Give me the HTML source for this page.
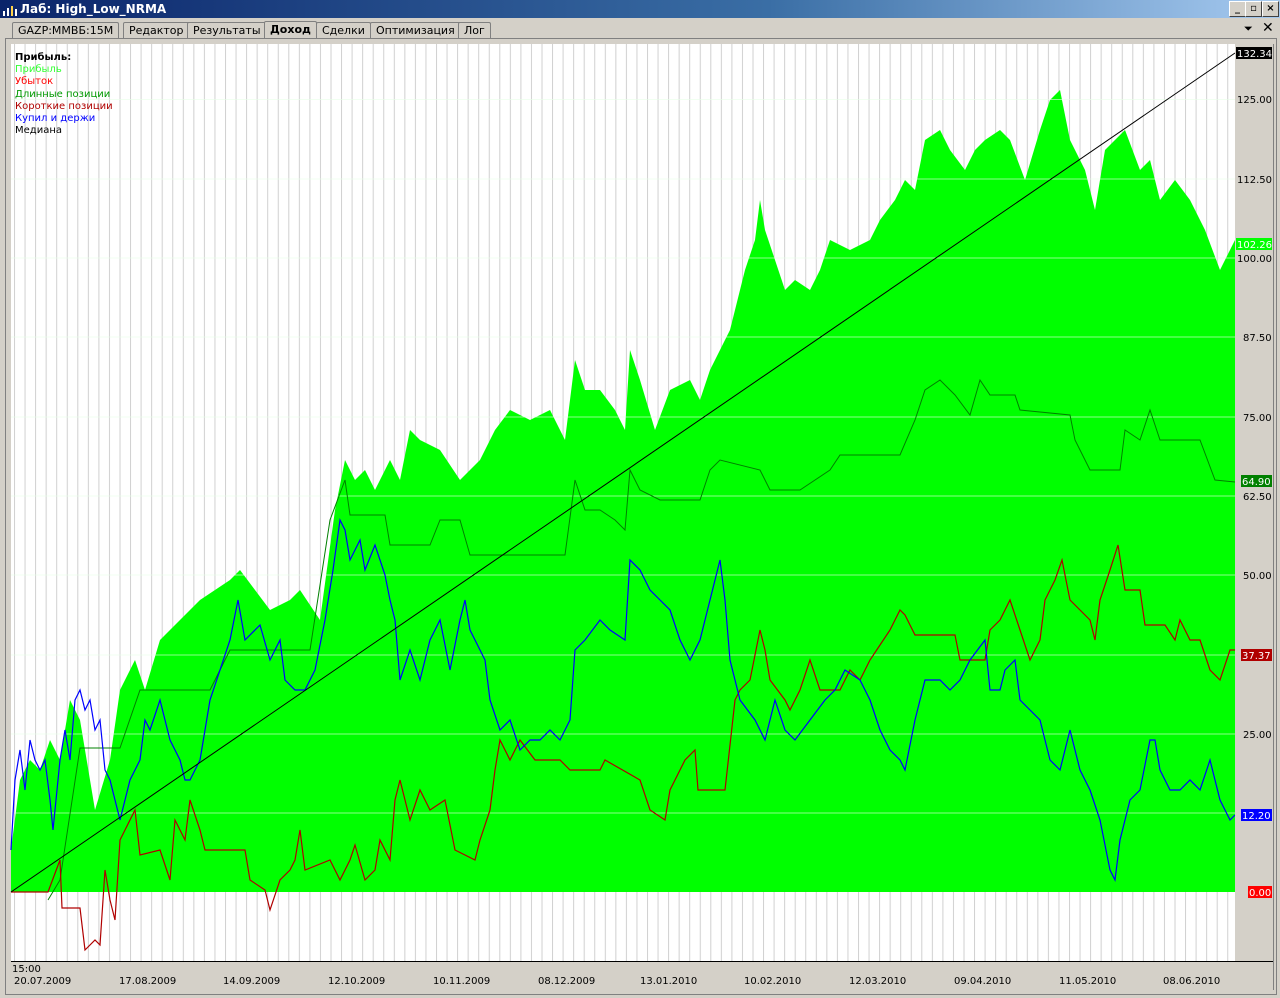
<!DOCTYPE html>
<html><head><meta charset="utf-8"><style>
html,body{margin:0;padding:0;width:1280px;height:998px;overflow:hidden;background:#d4d0c8;font-family:Tahoma,"DejaVu Sans","Liberation Sans",sans-serif;font-size:11px}
#title{position:absolute;left:0;top:0;width:1280px;height:18px;background:linear-gradient(90deg,#0a246a 0%,#3a6ea5 60%,#a6caf0 100%);color:#fff;font-weight:bold;font-size:12px;line-height:18px}
#title span{position:absolute;left:20px;top:0}
.btn{position:absolute;top:1px;width:15px;height:14px;background:#d4d0c8;border:1px solid;border-color:#fff #404040 #404040 #fff;color:#000;font-size:10px;line-height:13px;text-align:center;font-weight:bold}
#tabs{position:absolute;left:0;top:20px;width:1280px;height:18px}
.tab{position:absolute;top:2px;height:15px;border:1px solid #808080;border-bottom:none;background:#d4d0c8;line-height:15px;padding:0 5px;color:#000;border-radius:2px 2px 0 0}
svg{position:absolute;left:0;top:0}
</style></head><body>
<div id="title"><svg width="18" height="18" style="position:relative;left:1px;top:0"><rect x="2" y="11" width="2" height="5" fill="#fff"/><rect x="6" y="8" width="2" height="8" fill="#fff"/><rect x="10" y="6" width="2" height="10" fill="#ffd24a"/><rect x="14" y="9" width="2" height="7" fill="#fff"/></svg><span>Лаб: High_Low_NRMA</span>
<div class="btn" style="left:1229px">_</div><div class="btn" style="left:1245px">▫</div><div class="btn" style="left:1262px">×</div></div>
<div id="tabs">
<div class="tab" style="left:12px">GAZP:ММВБ:15M</div>
<div class="tab" style="left:123px">Редактор</div>
<div class="tab" style="left:187px">Результаты</div>
<div class="tab" style="left:264px;font-weight:bold;top:1px;height:17px">Доход</div>
<div class="tab" style="left:316px">Сделки</div>
<div class="tab" style="left:370px">Оптимизация</div>
<div class="tab" style="left:458px">Лог</div>
<div style="position:absolute;left:1244px;top:2px;font-size:11px">⏷</div>
<div style="position:absolute;left:1262px;top:0px;font-size:14px">✕</div>
</div>
<div style="position:absolute;left:5px;top:38px;width:1270px;height:955px;border:1px solid #808080;background:#d4d0c8"></div>
<div style="position:absolute;left:11px;top:44px;width:1224px;height:917px;background:#fff"></div>
<svg width="1280" height="998">
<defs><pattern id="vg" x="14" y="0" width="10.55" height="998" patternUnits="userSpaceOnUse"><rect x="0" y="0" width="1" height="998" fill="#d0d0d0"/></pattern></defs>
<rect x="11" y="44" width="1224" height="917" fill="url(#vg)"/>
<polygon fill="#00ff00" points="11,892 11,850 20,780 30,760 40,770 50,740 60,760 70,700 80,720 90,780 95,810 110,760 120,690 135,660 145,690 160,640 180,620 200,600 215,590 230,580 240,570 255,590 270,610 290,600 300,590 320,620 335,510 345,460 355,480 365,470 375,490 390,460 400,480 410,430 420,440 440,450 460,480 480,460 495,430 510,410 530,420 550,410 565,440 575,360 585,390 600,390 615,410 625,430 630,350 640,380 655,430 670,390 690,380 700,400 710,370 720,350 730,330 745,270 755,240 760,200 765,230 775,260 785,290 795,280 810,290 820,270 830,240 850,250 870,240 880,220 895,200 905,180 915,190 925,140 940,130 950,150 965,170 975,150 985,140 1000,130 1010,140 1025,180 1040,130 1050,100 1060,90 1070,140 1085,170 1095,210 1105,150 1115,140 1125,130 1140,170 1150,160 1160,200 1175,180 1190,200 1205,230 1220,270 1235,240 1235,892"/>
<g stroke="#e8ffe8" stroke-opacity="0.6" stroke-width="1">
<line x1="11" y1="99.5" x2="1235" y2="99.5"/><line x1="11" y1="179" x2="1235" y2="179"/><line x1="11" y1="258" x2="1235" y2="258"/><line x1="11" y1="337" x2="1235" y2="337"/><line x1="11" y1="417" x2="1235" y2="417"/><line x1="11" y1="496" x2="1235" y2="496"/><line x1="11" y1="575" x2="1235" y2="575"/><line x1="11" y1="655" x2="1235" y2="655"/><line x1="11" y1="734" x2="1235" y2="734"/><line x1="11" y1="813" x2="1235" y2="813"/></g>
<polyline fill="none" stroke="#008000" stroke-width="1" points="48,900 60,880 80,748 120,748 140,690 210,690 230,650 310,650 330,520 345,480 350,515 385,515 390,545 430,545 440,520 460,520 470,555 565,555 575,480 585,510 600,510 615,520 625,530 630,470 640,490 660,500 700,500 710,470 720,460 760,470 770,490 800,490 830,470 840,455 900,455 915,420 925,390 940,380 955,395 970,415 980,380 990,395 1015,395 1020,410 1070,415 1075,440 1090,470 1120,470 1125,430 1140,440 1150,410 1160,440 1200,440 1215,480 1235,482"/>
<polyline fill="none" stroke="#b00000" stroke-width="1.2" points="11,892 48,892 60,860 62,908 80,908 85,950 95,940 100,945 105,870 110,900 115,920 120,840 125,830 135,810 140,855 160,850 170,880 175,820 185,840 190,800 200,830 205,850 245,850 250,880 265,890 270,910 280,880 290,870 295,860 300,830 305,870 330,860 340,880 350,860 355,845 365,880 375,870 380,840 390,860 395,800 400,780 410,820 420,790 430,810 445,800 455,850 475,860 480,840 490,810 495,770 500,740 510,760 520,740 535,760 560,760 570,770 600,770 605,760 640,780 650,810 665,820 670,790 685,760 695,750 698,790 725,790 735,700 740,690 750,680 760,630 765,650 770,680 785,700 790,710 800,690 810,660 820,690 840,690 850,670 860,680 870,660 880,645 890,630 900,610 905,615 915,635 955,635 960,660 985,660 990,630 1000,620 1010,600 1020,630 1030,660 1040,640 1045,600 1055,580 1062,560 1070,600 1080,610 1090,620 1095,640 1100,600 1110,570 1118,545 1125,590 1140,590 1145,625 1165,625 1175,640 1180,620 1190,640 1200,640 1210,670 1220,680 1230,650 1235,650"/>
<polyline fill="none" stroke="#0000ff" stroke-width="1.2" points="11,850 15,780 20,750 25,790 30,740 35,760 40,770 45,760 50,800 53,830 60,760 65,730 70,760 75,700 80,690 85,710 90,700 95,730 100,720 105,770 110,780 115,800 120,820 125,800 130,780 140,760 145,720 150,730 160,700 165,720 170,740 180,760 185,780 190,780 200,760 210,700 220,670 230,640 238,600 245,640 260,625 270,660 280,640 285,680 295,690 305,690 315,670 325,620 333,570 340,520 345,530 350,560 360,540 365,570 375,545 385,575 390,600 395,620 400,680 410,650 420,680 430,640 440,620 450,670 460,620 465,600 470,630 480,650 485,660 490,700 500,730 510,720 520,750 530,740 540,740 550,730 560,740 570,720 575,650 585,640 600,620 610,630 625,640 630,560 640,570 650,590 660,600 670,610 680,640 690,660 700,640 710,600 720,560 725,600 730,660 740,700 755,720 765,740 775,700 785,730 795,740 810,720 825,700 835,690 845,670 860,680 870,700 880,730 890,750 900,760 905,770 915,720 925,680 940,680 950,690 960,680 970,660 985,640 990,690 1000,690 1005,670 1015,660 1020,700 1040,720 1050,760 1060,770 1070,730 1080,770 1090,790 1100,820 1110,870 1115,880 1120,840 1130,800 1140,790 1150,740 1155,740 1160,770 1170,790 1180,790 1190,780 1200,790 1210,760 1220,800 1230,820 1235,815"/>
<line x1="11" y1="892" x2="1235" y2="53" stroke="#000" stroke-width="1"/>
<rect x="1235" y="44" width="38" height="917" fill="#d4d0c8"/>
<line x1="11" y1="961.5" x2="1273" y2="961.5" stroke="#000"/>
<line x1="1273.5" y1="44" x2="1273.5" y2="990" stroke="#808080"/>
<g font-family="Tahoma,'DejaVu Sans',sans-serif" font-size="10" fill="#000">
<rect x="1236" y="47" width="36" height="12" fill="#000"/><text x="1237" y="57" fill="#fff">132.34</text>
<text x="1237" y="103">125.00</text><text x="1237" y="183">112.50</text>
<rect x="1236" y="238" width="36" height="12" fill="#00ff00"/><text x="1237" y="248" fill="#fff">102.26</text>
<text x="1237" y="262">100.00</text><text x="1243" y="341">87.50</text><text x="1243" y="421">75.00</text>
<rect x="1241" y="475" width="31" height="12" fill="#008000"/><text x="1242" y="485" fill="#fff">64.90</text>
<text x="1243" y="500">62.50</text><text x="1243" y="579">50.00</text>
<rect x="1241" y="649" width="31" height="12" fill="#b00000"/><text x="1242" y="659" fill="#fff">37.37</text>
<text x="1243" y="738">25.00</text>
<rect x="1241" y="809" width="31" height="12" fill="#0000ff"/><text x="1242" y="819" fill="#fff">12.20</text>
<rect x="1248" y="886" width="24" height="12" fill="#ff0000"/><text x="1249" y="896" fill="#fff">0.00</text>
<text x="12" y="972">15:00</text>
<text x="14" y="984">20.07.2009</text><text x="119" y="984">17.08.2009</text><text x="223" y="984">14.09.2009</text><text x="328" y="984">12.10.2009</text><text x="433" y="984">10.11.2009</text><text x="538" y="984">08.12.2009</text><text x="640" y="984">13.01.2010</text><text x="744" y="984">10.02.2010</text><text x="849" y="984">12.03.2010</text><text x="954" y="984">09.04.2010</text><text x="1059" y="984">11.05.2010</text><text x="1163" y="984">08.06.2010</text>
<text x="15" y="60" font-weight="bold">Прибыль:</text>
<text x="15" y="72" fill="#33ff33">Прибыль</text>
<text x="15" y="84" fill="#ff0000">Убыток</text>
<text x="15" y="97" fill="#009900">Длинные позиции</text>
<text x="15" y="109" fill="#b00000">Короткие позиции</text>
<text x="15" y="121" fill="#0000ff">Купил и держи</text>
<text x="15" y="133">Медиана</text>
</g>
</svg>
</body></html>
